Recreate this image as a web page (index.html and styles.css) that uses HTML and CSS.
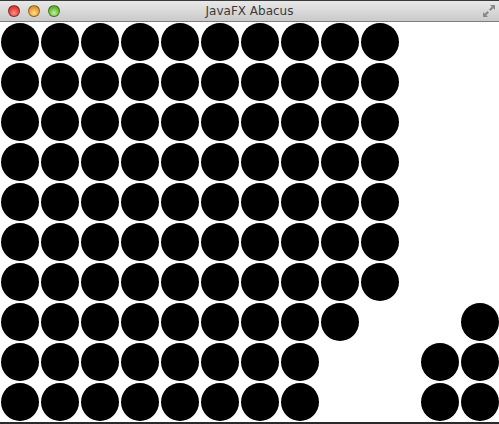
FILE: index.html
```html
<!DOCTYPE html>
<html>
<head>
<meta charset="utf-8">
<link rel="stylesheet" href="styles.css">
</head>
<body>
<div class="window">
  <div class="titlebar">
    <div class="lights">
      <span class="light red"></span>
      <span class="light yellow"></span>
      <span class="light green"></span>
    </div>
    <div class="title">JavaFX Abacus</div>
    <svg class="resize" width="14" height="14" viewBox="0 0 14 14">
      <path d="M8 1 H13 V6 L11.3 4.3 L8.6 7 L7 5.4 L9.7 2.7 Z" fill="#8a8a8a"/>
      <path d="M6 13 H1 V8 L2.7 9.7 L5.4 7 L7 8.6 L4.3 11.3 Z" fill="#8a8a8a"/>
    </svg>
  </div>
  <div class="board" id="board"></div>
</div>
<script>
  var rows = [
    "bbbbbbbbbb|..",
    "bbbbbbbbbb|..",
    "bbbbbbbbbb|..",
    "bbbbbbbbbb|..",
    "bbbbbbbbbb|..",
    "bbbbbbbbbb|..",
    "bbbbbbbbbb|..",
    "bbbbbbbbb.|.b",
    "bbbbbbbb..|bb",
    "bbbbbbbb..|bb"
  ];
  var board = document.getElementById('board');
  rows.forEach(function (r) {
    for (var i = 0; i < r.length; i++) {
      var c = document.createElement('div');
      c.className = r[i] === 'b' ? 'cell bead' : (r[i] === '|' ? 'spacer' : 'cell');
      board.appendChild(c);
    }
  });
</script>
</body>
</html>
```
FILE: styles.css
```css
html, body {
  margin: 0;
  padding: 0;
  background: #ffffff;
}
.window {
  width: 499px;
  height: 424px;
  overflow: hidden;
  display: flex;
  flex-direction: column;
  border-bottom: 2px solid #2a2a2a;
  box-sizing: border-box;
}
.titlebar {
  height: 22px;
  flex: none;
  box-sizing: border-box;
  border-top: 1px solid #3a3a3a;
  border-bottom: 1px solid #7e7e7e;
  background: linear-gradient(#e8e8e8, #cacaca);
  display: flex;
  align-items: center;
  position: relative;
}
.lights {
  display: flex;
  gap: 8px;
  padding-left: 8px;
}
.light {
  width: 12px;
  height: 12px;
  border-radius: 50%;
  box-sizing: border-box;
  border: 1px solid rgba(0,0,0,0.35);
}
.red { background: radial-gradient(circle at 50% 70%, #ff8f87 0%, #e2463f 55%, #b0241e 100%); }
.yellow { background: radial-gradient(circle at 50% 70%, #ffe08a 0%, #e8a23a 55%, #b5761a 100%); }
.green { background: radial-gradient(circle at 50% 70%, #c4f19a 0%, #6fbf3f 55%, #3f8a20 100%); }
.title {
  position: absolute;
  left: 0;
  right: 0;
  top: 3px;
  text-align: center;
  font-family: "DejaVu Sans", sans-serif;
  font-size: 12px;
  color: #3a3a3a;
  pointer-events: none;
}
.resize {
  margin-left: auto;
  margin-right: 3px;
}
.board {
  display: grid;
  grid-template-columns: repeat(10, 40px) 20px repeat(2, 40px);
  grid-auto-rows: 40px;
  background: #ffffff;
}
.cell {
  width: 40px;
  height: 40px;
  box-sizing: border-box;
  padding: 1px;
}
.spacer {
  width: 20px;
}
.bead::after {
  content: "";
  display: block;
  width: 38px;
  height: 38px;
  border-radius: 50%;
  background: #000000;
}
```
